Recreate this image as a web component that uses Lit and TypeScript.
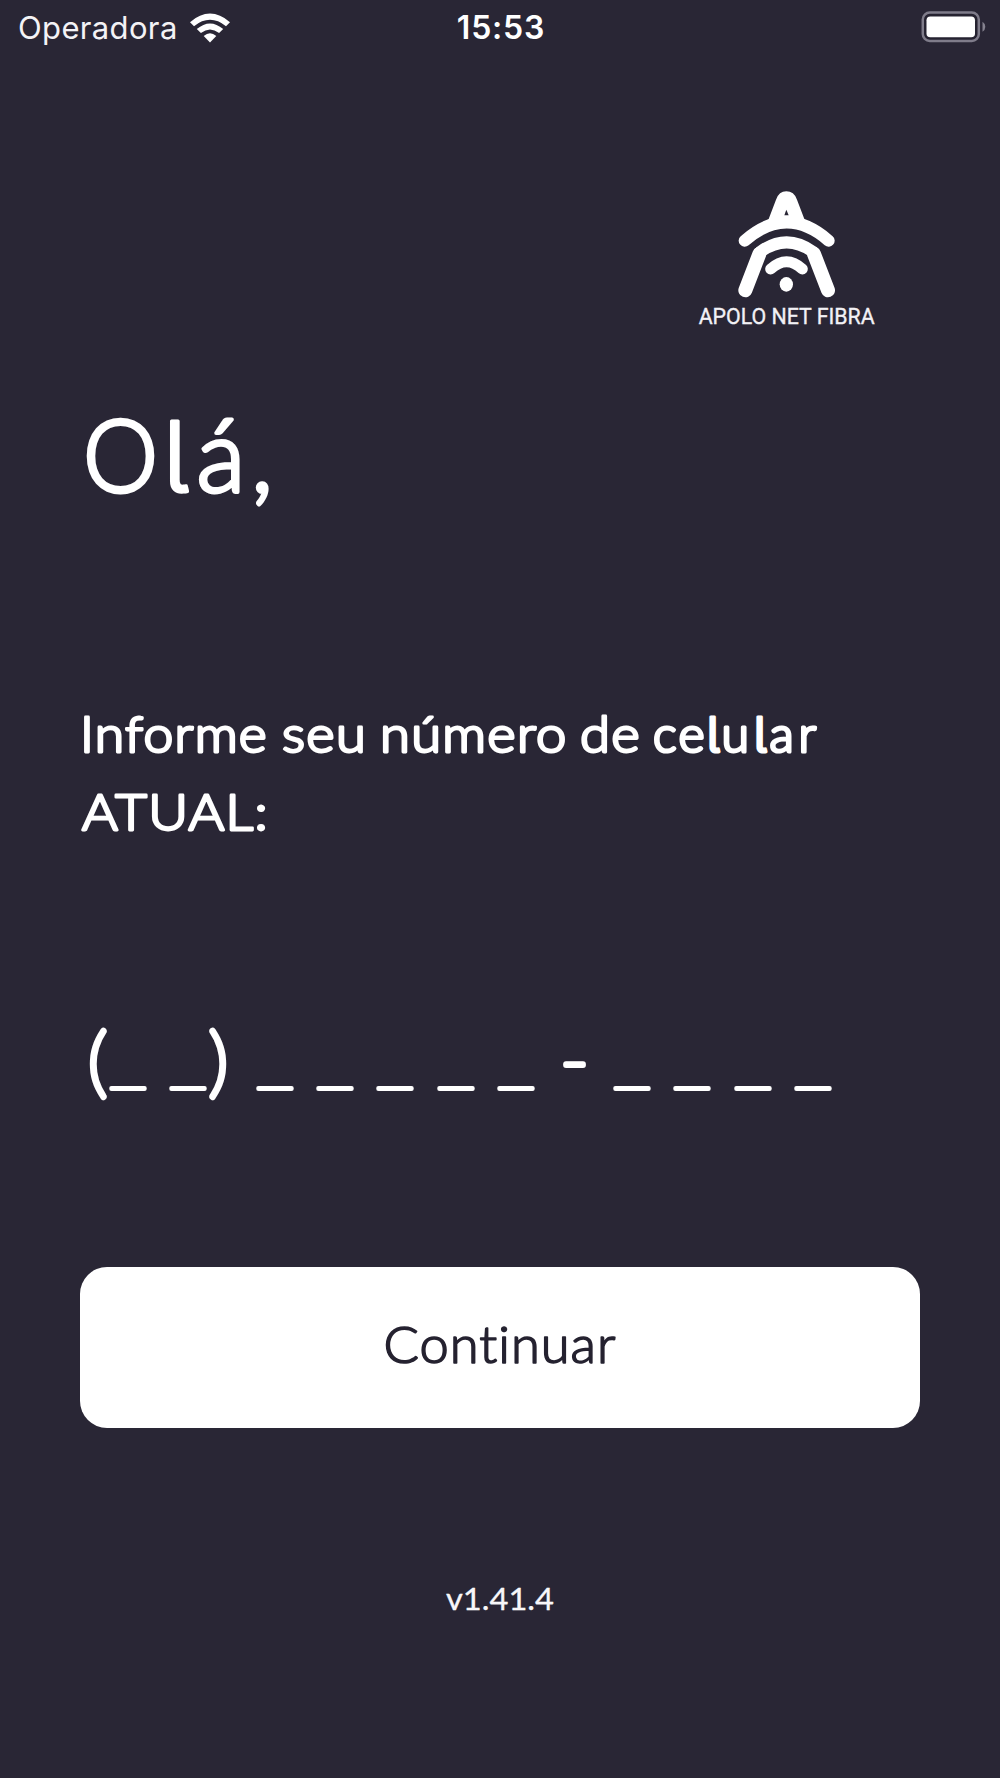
import { LitElement, html, svg, css } from "lit";
import { customElement } from "lit/decorators.js";

type Word = { text: string; x: number; width: number };

// A line of words, each set to a fixed measure.
const line = (words: Word[], y: number) => svg`<text y=${y}>${words.map(
  (w, i) => svg`${i ? " " : ""}<tspan x=${w.x} textLength=${w.width} lengthAdjust="spacingAndGlyphs">${w.text}</tspan>`
)}</text>`;

@customElement("status-bar")
class StatusBar extends LitElement {
  static styles = css`
    :host {
      display: grid;
      grid-template-columns: 1fr auto 1fr;
      align-items: center;
      height: 54px;
      box-sizing: border-box;
      padding: 0 14px 0 18px;
      color: #fff;
      font-family: Inter, "Liberation Sans", sans-serif;
      font-size: 31px;
      line-height: 54px;
    }
    .carrier { display: flex; align-items: center; gap: 11px; color: #f4f3f6; }
    .name { letter-spacing: 0.35px; padding-top: 1px; }
    .clock { font-weight: 600; font-size: 32px; letter-spacing: 0.8px; padding-top: 1px; margin-left: -2px; }
    .battery { justify-self: end; margin-top: -1px; }
    svg { display: block; }
  `;
  render() {
    return html`
      <div class="carrier">
        <span class="name">Operadora</span>
        <svg width="42" height="32" viewBox="0 0 42 32" fill="#fff">
          <path d="M1 10.2Q21-7 41 10.2L37 14.2Q21 1.4 5 14.2Z" />
          <path d="M7.8 17Q21 5.8 34.2 17L30.1 21Q21 13.8 11.9 21Z" />
          <path d="M14.7 23.9Q21 18.8 27.3 23.9L21 30.4Z" />
        </svg>
      </div>
      <div class="clock">15:53</div>
      <svg class="battery" width="66" height="32" viewBox="0 0 66 32">
        <rect x="2.8" y="1.5" width="56" height="28.5" rx="7" fill="#252230" stroke="#7f7c8a" stroke-width="2.5" />
        <rect x="6.5" y="5.4" width="48.5" height="20.8" rx="3.8" fill="#fff" />
        <path d="M62.5 10.8q2.8 1.8 2.8 5t-2.8 5z" fill="#85828f" />
      </svg>
    `;
  }
}

@customElement("brand-logo")
class BrandLogo extends LitElement {
  static styles = css`
    :host { display: block; width: 220px; height: 170px; }
    svg { display: block; }
    .stroke { fill: none; stroke: #fff; stroke-linecap: round; stroke-linejoin: round; }
    .label { font-family: Roboto, "Liberation Sans", sans-serif; font-size: 67px; fill: #f2f1f5; stroke: #f2f1f5; stroke-width: 1px; }
  `;
  render() {
    return html`
      <svg width="220" height="170" viewBox="0 0 660 510">
        <path d="M264 152L288 89Q297 64 319 64Q342 64 351 89L375 152L350 168H290Z" fill="#fff" />
        <path d="M313 136L319 119L326 136Z" fill="#292635" />
        <path class="stroke" d="M194 212Q320 102 446 212" stroke-width="36" />
        <path class="stroke" d="M196 361L238 252M444 361L402 252" stroke-width="42" />
        <path class="stroke" d="M240 246Q320 188 400 246" stroke-width="36" />
        <path class="stroke" d="M272 297Q320 253 367 297" stroke-width="33" />
        <ellipse cx="319" cy="343" rx="20" ry="22" fill="#fff" />
        <text class="label" x="56" y="461" textLength="528" lengthAdjust="spacingAndGlyphs">APOLO NET FIBRA</text>
      </svg>
    `;
  }
}

@customElement("app-root")
class AppRoot extends LitElement {
  static styles = css`
    :host {
      display: block;
      min-height: 1778px;
      background: #292635;
      font-family: Lato, "Open Sans", sans-serif;
      font-variant-ligatures: none;
    }
    .page { display: flex; flex-direction: column; padding: 116px 80px 0; }
    .logo { align-self: flex-end; margin-right: 20px; }
    svg { display: block; overflow: visible; }
    text { fill: #fff; stroke: #fff; stroke-linejoin: round; font-weight: 300; }
    .tail {
      font-family: Inter, Lato, sans-serif;
      font-size: 0.96em;
      font-feature-settings: "cv05" 1, "ss02" 1;
    }
    .title { margin-top: 50px; font-size: 101px; }
    .title text { stroke-width: 3.8px; }
    .title .tail { stroke-width: 3.2px; }
    .prompt { margin-top: 170px; font-size: 50px; }
    .prompt text { stroke-width: 2.8px; letter-spacing: 1.2px; }
    .prompt .loose { stroke-width: 3.2px; }
    .phone { margin-top: 160px; font-size: 76px; }
    .phone text { stroke-width: 6px; font-weight: 100; }
    .phone .blank { stroke-width: 4px; }
    .button {
      display: flex;
      align-items: center;
      justify-content: center;
      margin: 137px 0 0;
      padding: 0;
      height: 160.5px;
      border: 0;
      border-radius: 27px;
      background: #fff;
      font: inherit;
      font-size: 51px;
    }
    .button text { fill: #252230; stroke: #252230; stroke-width: 1.6px; letter-spacing: 1px; }
    .version { margin-top: 142.5px; font-size: 31px; align-self: center; }
    .version text { font-weight: 400; stroke-width: 0.3px; fill: #f7f6f9; }
  `;
  render() {
    const glyphs: [string, number][] = [
      ["(", 8], ["_", 29], ["_", 89], [")", 129],
      ["_", 176], ["_", 236], ["_", 296], ["_", 357], ["_", 417],
      ["-", 480.5],
      ["_", 533], ["_", 593], ["_", 654], ["_", 714],
    ];
    return html`
      <status-bar></status-bar>
      <main class="page">
        <brand-logo class="logo"></brand-logo>
        <svg class="title" width="840" height="130" role="heading">
          ${svg`<text y="102"><tspan x="3" textLength="75" lengthAdjust="spacingAndGlyphs">O</tspan><tspan class="tail" x="83.5">l</tspan><tspan x="116.5 171">á,</tspan></text>`}
        </svg>
        <svg class="prompt" width="840" height="160">
          ${svg`${line(
            [
              { text: "Informe", x: 0, width: 188 },
              { text: "seu", x: 202, width: 85 },
              { text: "número", x: 300, width: 187.5 },
              { text: "de", x: 500, width: 61 },
            ],
            62
          )}<text class="loose" y="62"> <tspan x="573 598.5">ce</tspan><tspan class="tail" x="627">l</tspan><tspan x="641.5">u</tspan><tspan class="tail" x="674">l</tspan><tspan x="689.5 718.5">ar</tspan></text>`}
          ${line([{ text: "ATUAL:", x: 2, width: 187 }], 139.5)}
        </svg>
        <svg class="phone" width="840" height="120">
          ${svg`<text y="78">${glyphs.map(([c, x]) =>
            c === "_"
              ? svg`<tspan class="blank" x=${x + 0.5} y="69" textLength="37" lengthAdjust="spacingAndGlyphs">_</tspan>`
              : svg`<tspan x=${x} y=${c === "-" ? 76.5 : 78}>${c}</tspan>`
          )}</text>`}
        </svg>
        <button class="button">
          <svg width="234" height="60">${line([{ text: "Continuar", x: 0.5, width: 233 }], 46)}</svg>
        </button>
        <svg class="version" width="108" height="60">
          ${line([{ text: "v1.41.4", x: 0, width: 108 }], 40)}
        </svg>
      </main>
    `;
  }
}
